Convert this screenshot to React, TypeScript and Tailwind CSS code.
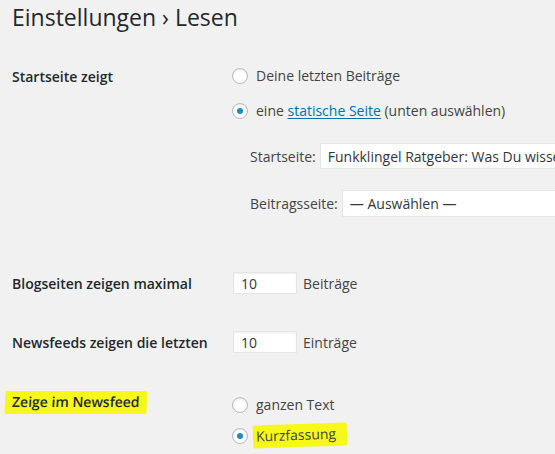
export default function App() {
  return (
    <div
      className="w-[555px] h-[454px] overflow-hidden bg-[#f1f1f1] text-[14px] text-[#23282d]"
      style={{ fontFamily: '"Open Sans", sans-serif' }}
    >
      <h1 className="pl-3 pt-[3px] text-[23px] leading-[29px] font-normal text-[#23282d]">
        Einstellungen › Lesen
      </h1>

      {/* Startseite zeigt */}
      <div className="flex pl-3 mt-[34px]">
        <div className="w-[220px] pt-[1px] font-semibold leading-5">Startseite zeigt</div>
        <div className="flex-1 min-w-0">
          <label className="flex items-center gap-2 leading-5 text-[#444]">
            <Radio />
            <span>Deine letzten Beiträge</span>
          </label>
          <label className="flex items-center gap-2 leading-5 mt-[15px] text-[#444]">
            <Radio checked />
            <span>
              eine{" "}
              <a className="text-[#0073aa] underline underline-offset-2" href="#">
                statische Seite
              </a>{" "}
              (unten auswählen)
            </span>
          </label>

          <div className="flex items-center gap-1 mt-[22px] pl-[18px] whitespace-nowrap">
            <span className="text-[#444]">Startseite:</span>
            <div className="h-[26px] flex-none w-[240px] bg-white border border-[#e5e5e5] flex items-center pl-[7px] text-[#32373c] overflow-hidden">
              Funkklingel Ratgeber: Was Du wissen musst
            </div>
          </div>
          <div className="flex items-center gap-1 mt-[21px] pl-[18px] whitespace-nowrap">
            <span className="text-[#444]">Beitragsseite:</span>
            <div className="h-[27px] flex-none w-[220px] bg-white border border-[#e5e5e5] flex items-center pl-[7px] text-[#32373c]">
              — Auswählen —
            </div>
          </div>
        </div>
      </div>

      {/* Blogseiten */}
      <div className="flex items-center pl-3 mt-[55px]">
        <div className="w-[221px] font-semibold">Blogseiten zeigen maximal</div>
        <NumberBox />
        <span className="ml-[6px] text-[#444]">Beiträge</span>
      </div>

      {/* Newsfeeds */}
      <div className="flex items-center pl-3 mt-[37px]">
        <div className="w-[221px] font-semibold">Newsfeeds zeigen die letzten</div>
        <NumberBox />
        <span className="ml-[6px] text-[#444]">Einträge</span>
      </div>

      {/* Zeige im Newsfeed */}
      <div className="flex pl-3 mt-[38px]">
        <div className="w-[220px]">
          <span className="inline-block bg-[#f6f81a] -ml-[7px] px-[7px] pt-[1px] pb-[2px] -skew-x-3 rounded-[2px] font-semibold leading-5">
            Zeige im Newsfeed
          </span>
        </div>
        <div className="flex-1 pt-[4px]">
          <label className="flex items-center gap-2 leading-5 text-[#444]">
            <Radio />
            <span>ganzen Text</span>
          </label>
          <label className="flex items-center gap-2 leading-5 mt-[9px] text-[#444]">
            <Radio checked />
            <span className="inline-block bg-[#f6f81a] -ml-[3px] pl-[3px] pr-[11px] pt-[1px] pb-[2px] -rotate-2 rounded-[2px]">
              Kurzfassung
            </span>
          </label>
        </div>
      </div>
    </div>
  );
}

function Radio({ checked = false }: { checked?: boolean }) {
  return (
    <span className="w-4 h-4 flex-none rounded-full bg-white border border-[#b4b9be] shadow-[inset_0_1px_2px_rgba(0,0,0,0.1)] flex items-center justify-center">
      {checked && <span className="w-[6px] h-[6px] rounded-full bg-[#1e8cbe]" />}
    </span>
  );
}

function NumberBox() {
  return (
    <div className="w-[64px] h-[22px] bg-white border border-[#e5e5e5] shadow-[inset_0_1px_2px_rgba(0,0,0,0.07)] flex items-center pl-[7px] text-[#32373c]">
      10
    </div>
  );
}
